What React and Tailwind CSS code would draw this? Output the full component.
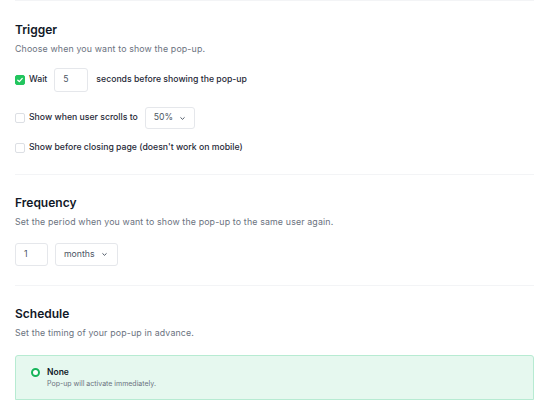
import React, { useState } from 'react';

function Checkbox({ checked, onChange }) {
  return (
    <button
      type="button"
      onClick={onChange}
      className={`flex h-[10px] w-[10px] shrink-0 items-center justify-center rounded-[2px] border ${
        checked ? 'border-[#22c55e] bg-[#22c55e]' : 'border-[#dcdfe4] bg-white'
      }`}
    >
      {checked && (
        <svg viewBox="0 0 10 10" className="h-[8px] w-[8px]">
          <path d="M2.2 5.2 L4.2 7 L7.8 3" fill="none" stroke="white" strokeWidth="1.6" strokeLinecap="round" strokeLinejoin="round" />
        </svg>
      )}
    </button>
  );
}

function Chevron() {
  return (
    <svg viewBox="0 0 10 10" className="h-[7px] w-[7px]">
      <path d="M2.5 3.8 L5 6.2 L7.5 3.8" fill="none" stroke="#4b5563" strokeWidth="1.4" strokeLinecap="round" strokeLinejoin="round" />
    </svg>
  );
}

function SectionHead({ title, desc }) {
  return (
    <>
      <h2 className="text-[12px] font-semibold leading-[20px] text-[#111827]">{title}</h2>
      <p className="mt-[2px] text-[8.8px] leading-[14px] tracking-[0.15px] text-[#6b7280]">{desc}</p>
    </>
  );
}

export default function App() {
  const [wait, setWait] = useState(true);
  const [scroll, setScroll] = useState(false);
  const [closing, setClosing] = useState(false);

  return (
    <div className="min-h-[400px] w-[542px] bg-white pl-[15px] pr-[8px] font-['Inter','Liberation_Sans',sans-serif] text-[#1f2937]">
      <section className="border-t border-[#f3f4f6] pt-[19px] pb-[19px]">
        <SectionHead title="Trigger" desc="Choose when you want to show the pop-up." />

        <div className="mt-[12px] flex items-center">
          <Checkbox checked={wait} onChange={() => setWait(!wait)} />
          <span className="ml-[4px] text-[8.7px] font-medium">Wait</span>
          <div className="ml-[7px] flex h-[24px] w-[34px] items-center rounded-[3px] border border-[#e5e7eb] px-[8px] text-[8.7px] text-[#4b5563]">5</div>
          <span className="ml-[8px] text-[8.7px] font-medium">seconds before showing the pop-up</span>
        </div>

        <div className="mt-[15px] flex items-center">
          <Checkbox checked={scroll} onChange={() => setScroll(!scroll)} />
          <span className="ml-[4px] text-[8.7px] font-medium">Show when user scrolls to</span>
          <div className="ml-[7px] flex h-[22px] w-[50px] items-center justify-between rounded-[3px] border border-[#e5e7eb] pl-[8px] pr-[8px] text-[8.7px] text-[#4b5563]">
            <span>50%</span>
            <Chevron />
          </div>
        </div>

        <div className="mt-[12px] flex h-[14px] items-center">
          <Checkbox checked={closing} onChange={() => setClosing(!closing)} />
          <span className="ml-[4px] text-[8.7px] font-medium">Show before closing page (doesn't work on mobile)</span>
        </div>
      </section>

      <section className="border-t border-[#f3f4f6] pt-[18px] pb-[19px]">
        <SectionHead title="Frequency" desc="Set the period when you want to show the pop-up to the same user again." />
        <div className="mt-[14px] flex items-center gap-[7px]">
          <div className="flex h-[23px] w-[33px] items-center rounded-[3px] border border-[#e5e7eb] px-[8px] text-[8.7px] text-[#4b5563]">1</div>
          <div className="flex h-[23px] w-[63px] items-center justify-between rounded-[3px] border border-[#e5e7eb] pl-[8px] pr-[9px] text-[8.7px] text-[#4b5563]">
            <span>months</span>
            <Chevron />
          </div>
        </div>
      </section>

      <section className="border-t border-[#f3f4f6] pt-[18px]">
        <SectionHead title="Schedule" desc="Set the timing of your pop-up in advance." />
        <div className="mt-[15px] flex items-start rounded-t-[3px] border border-[#b7ebd2] bg-[#e6f8ef] pl-[15px] pt-[10px] pb-[10px]">
          <div className="mt-[2px] flex h-[9px] w-[9px] items-center justify-center rounded-full border-[2.5px] border-[#16b55a] bg-white" />
          <div className="ml-[7px] flex flex-col">
            <span className="text-[8.5px] font-semibold leading-[12px] text-[#111827]">None</span>
            <span className="text-[7px] leading-[11px] text-[#6b7280]">Pop-up will activate immediately.</span>
          </div>
        </div>
      </section>
    </div>
  );
}
